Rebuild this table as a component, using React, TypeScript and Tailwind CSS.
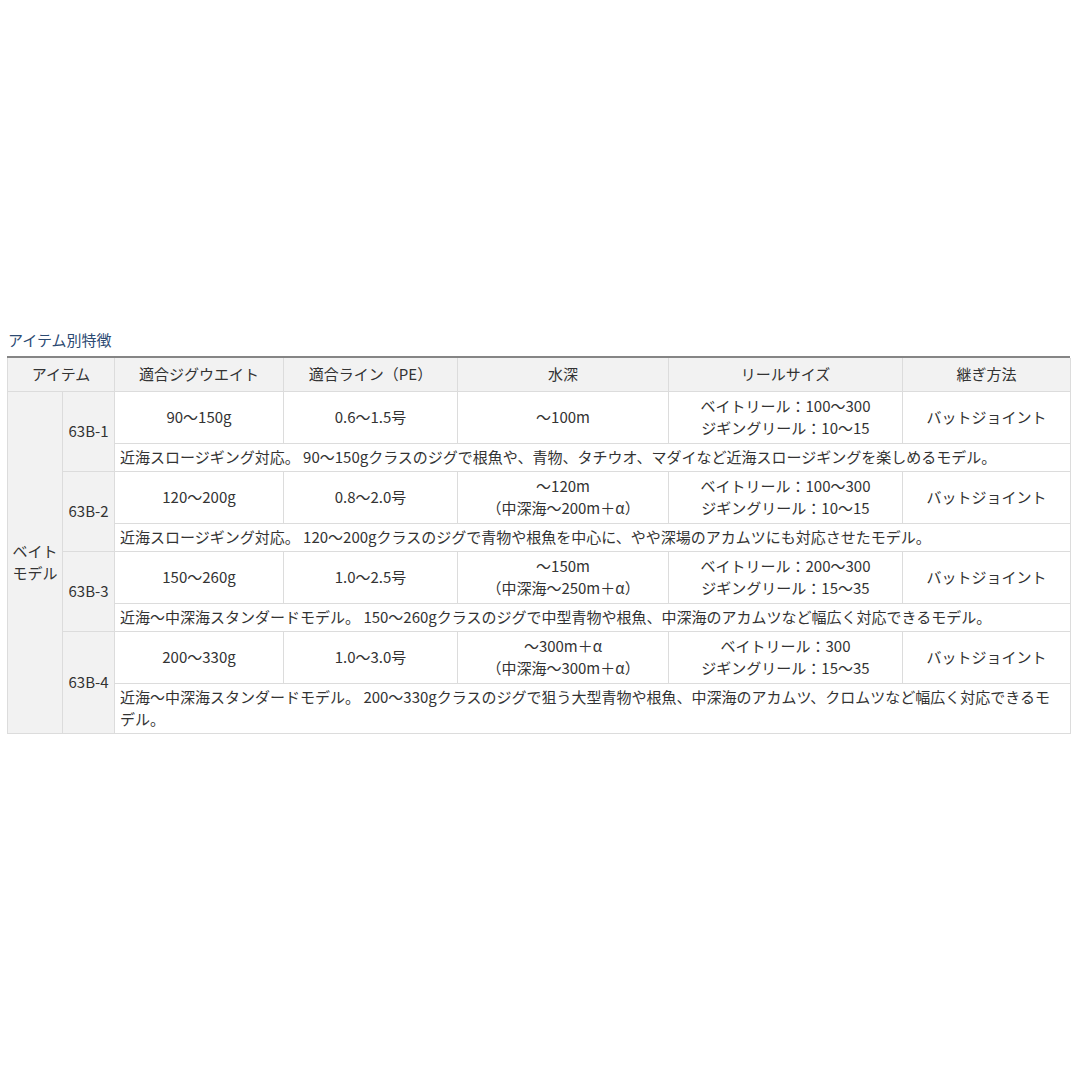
const rows = [
  {
    item: '63B-1',
    weight: '90〜150g',
    line: '0.6〜1.5号',
    depth: ['〜100m'],
    reel: ['ベイトリール：100〜300', 'ジギングリール：10〜15'],
    joint: 'バットジョイント',
    desc: '近海スロージギング対応。 90〜150gクラスのジグで根魚や、青物、タチウオ、マダイなど近海スロージギングを楽しめるモデル。',
  },
  {
    item: '63B-2',
    weight: '120〜200g',
    line: '0.8〜2.0号',
    depth: ['〜120m', '（中深海〜200m＋α）'],
    reel: ['ベイトリール：100〜300', 'ジギングリール：10〜15'],
    joint: 'バットジョイント',
    desc: '近海スロージギング対応。 120〜200gクラスのジグで青物や根魚を中心に、やや深場のアカムツにも対応させたモデル。',
  },
  {
    item: '63B-3',
    weight: '150〜260g',
    line: '1.0〜2.5号',
    depth: ['〜150m', '（中深海〜250m＋α）'],
    reel: ['ベイトリール：200〜300', 'ジギングリール：15〜35'],
    joint: 'バットジョイント',
    desc: '近海〜中深海スタンダードモデル。 150〜260gクラスのジグで中型青物や根魚、中深海のアカムツなど幅広く対応できるモデル。',
  },
  {
    item: '63B-4',
    weight: '200〜330g',
    line: '1.0〜3.0号',
    depth: ['〜300m＋α', '（中深海〜300m＋α）'],
    reel: ['ベイトリール：300', 'ジギングリール：15〜35'],
    joint: 'バットジョイント',
    desc: '近海〜中深海スタンダードモデル。 200〜330gクラスのジグで狙う大型青物や根魚、中深海のアカムツ、クロムツなど幅広く対応できるモデル。',
  },
];

const cell = 'border border-[#dcdcdc] text-center align-middle px-1';

export default function App() {
  return (
    <div
      className="w-[1072px] min-h-[1072px] bg-white text-[#333] text-[15px] leading-[22px]"
      style={{ fontFamily: '"Noto Sans CJK JP", "Noto Sans", sans-serif' }}
    >
      <div className="pt-[329px] pl-[7px] w-[1070px]">
        <h3 className="text-[15px] leading-[22px] text-[#2c4a72] pl-px mb-[5px]">アイテム別特徴</h3>
        <div className="border-t-2 border-[#858585]">
          <table className="w-full table-fixed border-collapse">
            <colgroup>
              <col className="w-[55px]" />
              <col className="w-[52px]" />
              <col className="w-[169px]" />
              <col className="w-[174px]" />
              <col className="w-[211px]" />
              <col className="w-[234px]" />
              <col className="w-[168px]" />
            </colgroup>
            <thead>
              <tr className="h-[33px] bg-[#f2f2f2]">
                <th colSpan={2} className={`${cell} border-t-0 font-normal`}>アイテム</th>
                <th className={`${cell} border-t-0 font-normal`}>適合ジグウエイト</th>
                <th className={`${cell} border-t-0 font-normal`}>適合ライン（PE）</th>
                <th className={`${cell} border-t-0 font-normal`}>水深</th>
                <th className={`${cell} border-t-0 font-normal`}>リールサイズ</th>
                <th className={`${cell} border-t-0 font-normal`}>継ぎ方法</th>
              </tr>
            </thead>
            <tbody>
              {rows.map((r, i) => (
                <>
                  <tr key={r.item} className="h-[52px]">
                    {i === 0 && (
                      <td rowSpan={8} className={`${cell} bg-[#f2f2f2]`}>
                        ベイト<br />モデル
                      </td>
                    )}
                    <td rowSpan={2} className={`${cell} bg-[#f2f2f2]`}>{r.item}</td>
                    <td className={cell}>{r.weight}</td>
                    <td className={cell}>{r.line}</td>
                    <td className={cell}>
                      {r.depth.map((d) => (
                        <div key={d}>{d}</div>
                      ))}
                    </td>
                    <td className={cell}>
                      {r.reel.map((d) => (
                        <div key={d}>{d}</div>
                      ))}
                    </td>
                    <td className={cell}>{r.joint}</td>
                  </tr>
                  <tr key={r.item + '-d'} className={i === 3 ? 'h-[50px]' : 'h-[28px]'}>
                    <td colSpan={5} className="border border-[#dcdcdc] text-left align-middle pl-[5px] pr-[12px] py-[2px]">
                      {r.desc}
                    </td>
                  </tr>
                </>
              ))}
            </tbody>
          </table>
        </div>
      </div>
    </div>
  );
}
